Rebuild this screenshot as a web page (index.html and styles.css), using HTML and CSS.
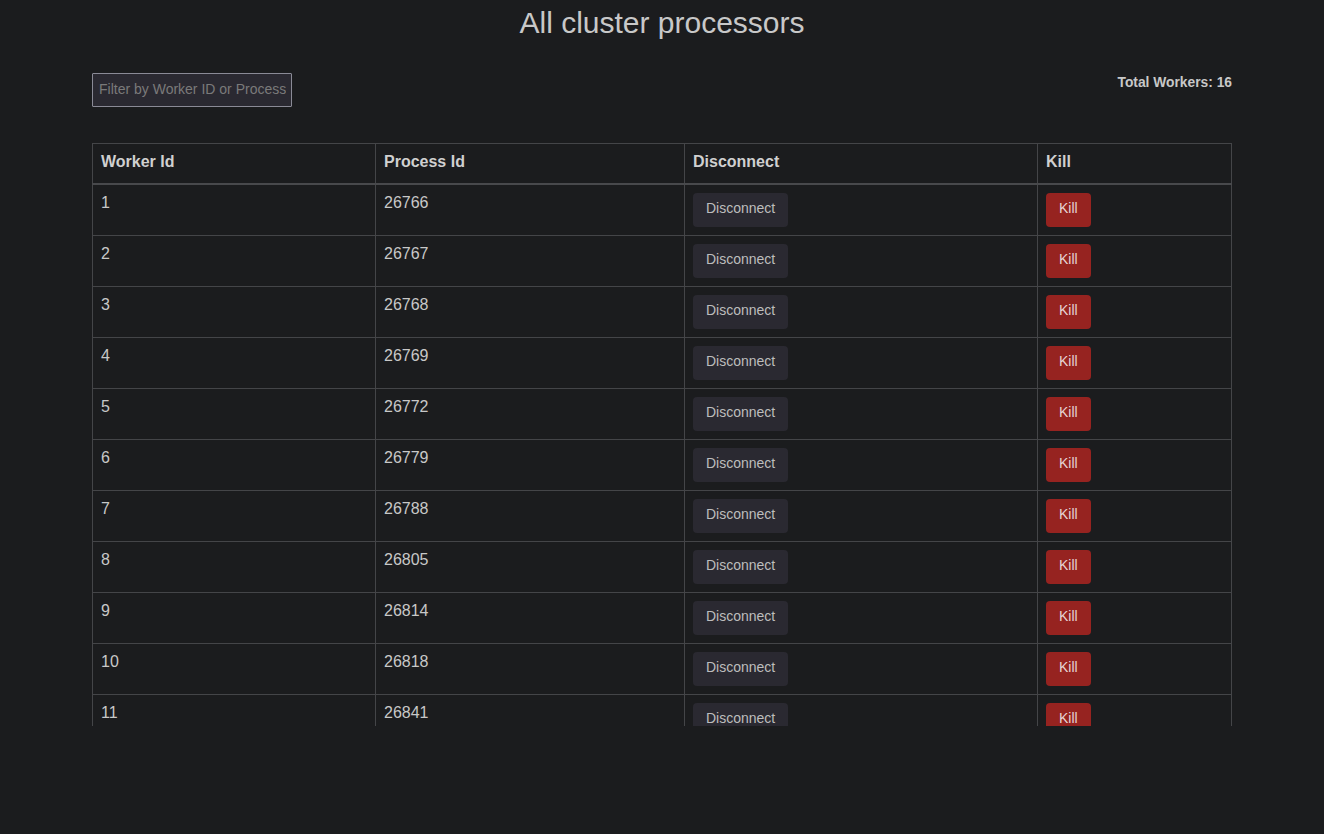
FILE: index.html
```html
<!DOCTYPE html>
<html lang="en">
<head>
<meta charset="utf-8">
<title>All cluster processors</title>
<link rel="stylesheet" href="styles.css">
</head>
<body>
<div class="container">
  <h1 class="title">All cluster processors</h1>
  <div class="toolbar">
    <input class="filter" type="text" placeholder="Filter by Worker ID or Process ID">
    <div class="total">Total Workers: 16</div>
  </div>
  <div class="table-wrap">
    <table class="workers">
      <colgroup>
        <col class="c-worker">
        <col class="c-process">
        <col class="c-disc">
        <col class="c-kill">
      </colgroup>
      <thead>
        <tr><th>Worker Id</th><th>Process Id</th><th>Disconnect</th><th>Kill</th></tr>
      </thead>
      <tbody>
        <tr><td>1</td><td>26766</td><td><button class="btn btn-disc">Disconnect</button></td><td><button class="btn btn-kill">Kill</button></td></tr>
        <tr><td>2</td><td>26767</td><td><button class="btn btn-disc">Disconnect</button></td><td><button class="btn btn-kill">Kill</button></td></tr>
        <tr><td>3</td><td>26768</td><td><button class="btn btn-disc">Disconnect</button></td><td><button class="btn btn-kill">Kill</button></td></tr>
        <tr><td>4</td><td>26769</td><td><button class="btn btn-disc">Disconnect</button></td><td><button class="btn btn-kill">Kill</button></td></tr>
        <tr><td>5</td><td>26772</td><td><button class="btn btn-disc">Disconnect</button></td><td><button class="btn btn-kill">Kill</button></td></tr>
        <tr><td>6</td><td>26779</td><td><button class="btn btn-disc">Disconnect</button></td><td><button class="btn btn-kill">Kill</button></td></tr>
        <tr><td>7</td><td>26788</td><td><button class="btn btn-disc">Disconnect</button></td><td><button class="btn btn-kill">Kill</button></td></tr>
        <tr><td>8</td><td>26805</td><td><button class="btn btn-disc">Disconnect</button></td><td><button class="btn btn-kill">Kill</button></td></tr>
        <tr><td>9</td><td>26814</td><td><button class="btn btn-disc">Disconnect</button></td><td><button class="btn btn-kill">Kill</button></td></tr>
        <tr><td>10</td><td>26818</td><td><button class="btn btn-disc">Disconnect</button></td><td><button class="btn btn-kill">Kill</button></td></tr>
        <tr><td>11</td><td>26841</td><td><button class="btn btn-disc">Disconnect</button></td><td><button class="btn btn-kill">Kill</button></td></tr>
        <tr><td>12</td><td>26852</td><td><button class="btn btn-disc">Disconnect</button></td><td><button class="btn btn-kill">Kill</button></td></tr>
        <tr><td>13</td><td>26860</td><td><button class="btn btn-disc">Disconnect</button></td><td><button class="btn btn-kill">Kill</button></td></tr>
        <tr><td>14</td><td>26871</td><td><button class="btn btn-disc">Disconnect</button></td><td><button class="btn btn-kill">Kill</button></td></tr>
        <tr><td>15</td><td>26883</td><td><button class="btn btn-disc">Disconnect</button></td><td><button class="btn btn-kill">Kill</button></td></tr>
        <tr><td>16</td><td>26894</td><td><button class="btn btn-disc">Disconnect</button></td><td><button class="btn btn-kill">Kill</button></td></tr>
      </tbody>
    </table>
  </div>
</div>
</body>
</html>
```
FILE: styles.css
```css
html, body {
  margin: 0;
  padding: 0;
  background: #1b1c1e;
  color: #c8c8c8;
  font-family: "Liberation Sans", Arial, sans-serif;
}

.container {
  width: 1140px;
  margin: 0 auto;
}

.title {
  margin: 5px 0 0;
  font-size: 30px;
  line-height: 36px;
  font-weight: normal;
  text-align: center;
  color: #c8c8c8;
}

.toolbar {
  display: flex;
  justify-content: space-between;
  align-items: flex-start;
  margin-top: 32px;
}

.filter {
  box-sizing: border-box;
  width: 200px;
  height: 34px;
  margin: 0;
  padding: 0 5px 3px 6px;
  background: #2a2931;
  border: 1px solid #8a8a96;
  border-radius: 1px;
  color: #c8c8c8;
  font-family: "Liberation Sans", Arial, sans-serif;
  font-size: 14px;
  outline: none;
}

.filter::placeholder {
  color: #7a7a7a;
}

.total {
  padding-top: 2px;
  font-size: 13.8px;
  line-height: 16px;
  font-weight: bold;
  color: #c8c8c8;
}

.table-wrap {
  margin-top: 36px;
  height: 583px;
  overflow-y: auto;
  scrollbar-width: none;
}

.table-wrap::-webkit-scrollbar {
  display: none;
}

.workers {
  width: 1139px;
  table-layout: fixed;
  border-collapse: collapse;
  font-size: 16px;
}

.c-worker { width: 283px; }
.c-process { width: 309px; }
.c-disc { width: 353px; }
.c-kill { width: 194px; }

.workers th,
.workers td {
  border: 1px solid #444548;
  padding: 8px;
  text-align: left;
  vertical-align: top;
  line-height: 20px;
}

.workers th {
  font-weight: bold;
  color: #d0d0d0;
  padding: 7px 8px 11px;
  line-height: 21px;
  border-bottom: 2px solid #48494c;
}

.workers td {
  color: #c8c8c8;
}

.btn {
  display: block;
  box-sizing: border-box;
  height: 34px;
  padding: 0 13px 5px;
  border: none;
  border-radius: 4px;
  font-family: "Liberation Sans", Arial, sans-serif;
  font-size: 14px;
  cursor: pointer;
}

.btn-disc {
  background: #2a2931;
  color: #bdbdbd;
}

.btn-kill {
  background: #962320;
  color: #e6d4d4;
}
```
